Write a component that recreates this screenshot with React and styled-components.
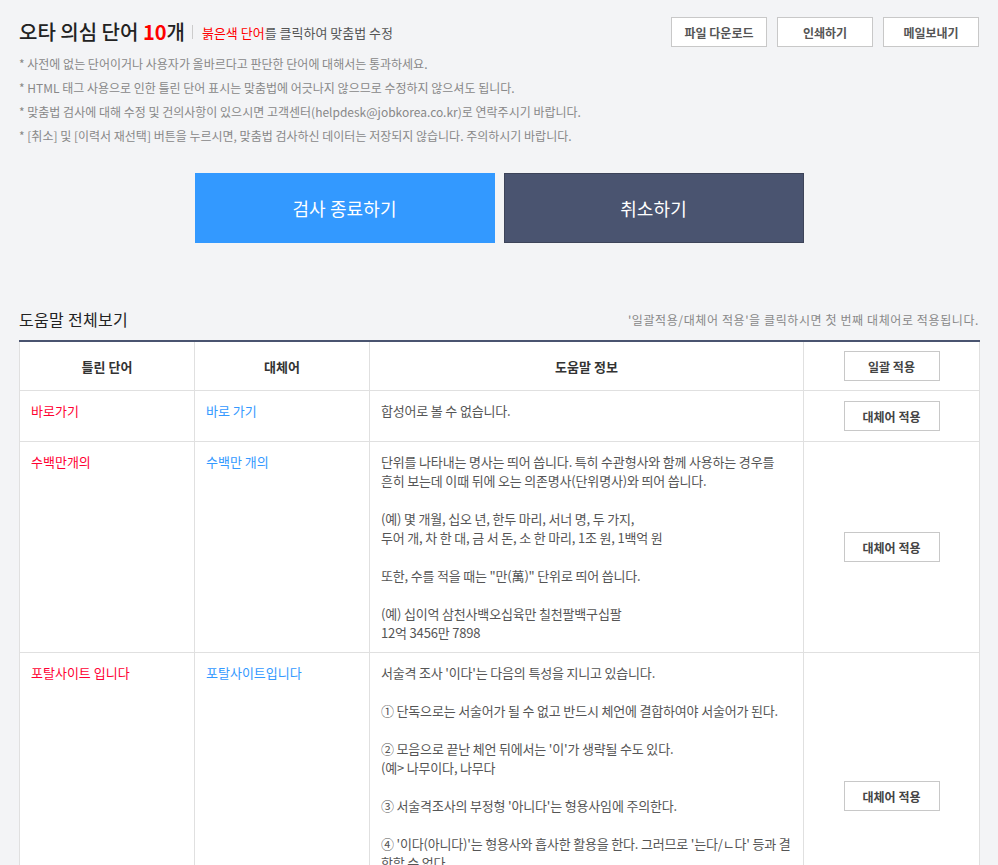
import React from "react";
import styled, { createGlobalStyle } from "styled-components";

const GlobalStyle = createGlobalStyle`
  body {
    margin: 0;
    background: #f3f4f6;
    font-family: "Noto Sans CJK KR", "Noto Sans", sans-serif;
    color: #555;
  }
`;

const notes = [
  "* 사전에 없는 단어이거나 사용자가 올바르다고 판단한 단어에 대해서는 통과하세요.",
  "* HTML 태그 사용으로 인한 틀린 단어 표시는 맞춤법에 어긋나지 않으므로 수정하지 않으셔도 됩니다.",
  "* 맞춤법 검사에 대해 수정 및 건의사항이 있으시면 고객센터(helpdesk@jobkorea.co.kr)로 연락주시기 바랍니다.",
  "* [취소] 및 [이력서 재선택] 버튼을 누르시면, 맞춤법 검사하신 데이터는 저장되지 않습니다. 주의하시기 바랍니다.",
];

const rows = [
  {
    wrong: "바로가기",
    right: "바로 가기",
    info: "합성어로 볼 수 없습니다.",
  },
  {
    wrong: "수백만개의",
    right: "수백만 개의",
    info:
      "단위를 나타내는 명사는 띄어 씁니다. 특히 수관형사와 함께 사용하는 경우를\n흔히 보는데 이때 뒤에 오는 의존명사(단위명사)와 띄어 씁니다.\n\n(예) 몇 개월, 십오 년, 한두 마리, 서너 명, 두 가지,\n두어 개, 차 한 대, 금 서 돈, 소 한 마리, 1조 원, 1백억 원\n\n또한, 수를 적을 때는 \"만(萬)\" 단위로 띄어 씁니다.\n\n(예) 십이억 삼천사백오십육만 칠천팔백구십팔\n12억 3456만 7898",
  },
  {
    wrong: "포탈사이트 입니다",
    right: "포탈사이트입니다",
    info:
      "서술격 조사 '이다'는 다음의 특성을 지니고 있습니다.\n\n① 단독으로는 서술어가 될 수 없고 반드시 체언에 결합하여야 서술어가 된다.\n\n② 모음으로 끝난 체언 뒤에서는 '이'가 생략될 수도 있다.\n(예> 나무이다, 나무다\n\n③ 서술격조사의 부정형 '아니다'는 형용사임에 주의한다.\n\n④ '이다(아니다)'는 형용사와 흡사한 활용을 한다. 그러므로 '는다/ㄴ다' 등과 결\n합할 수 없다.\n\n⑤ '이다'는 체언 뒤에 붙여 쓰는 조사이므로 앞말과 띄어 쓰지 않는다.\n(예> 학생이다, 포탈사이트입니다",
  },
];

export default function App() {
  return (
    <Page>
      <GlobalStyle />
      <TopBar>
        <TitleWrap>
          <Title>
            오타 의심 단어 <Count>10</Count>개
          </Title>
          <Divider />
          <Guide>
            <Red>붉은색 단어</Red>를 클릭하여 맞춤법 수정
          </Guide>
        </TitleWrap>
        <ToolButtons>
          <ToolButton>파일 다운로드</ToolButton>
          <ToolButton>인쇄하기</ToolButton>
          <ToolButton>메일보내기</ToolButton>
        </ToolButtons>
      </TopBar>

      <Notes>
        {notes.map((n) => (
          <li key={n}>{n}</li>
        ))}
      </Notes>

      <ActionRow>
        <BigButton $primary>검사 종료하기</BigButton>
        <BigButton>취소하기</BigButton>
      </ActionRow>

      <HelpHead>
        <HelpTitle>도움말 전체보기</HelpTitle>
        <HelpNote>'일괄적용/대체어 적용'을 클릭하시면 첫 번째 대체어로 적용됩니다.</HelpNote>
      </HelpHead>

      <Table>
        <colgroup>
          <col style={{ width: 175 }} />
          <col style={{ width: 175 }} />
          <col style={{ width: 434 }} />
          <col style={{ width: 176 }} />
        </colgroup>
        <thead>
          <tr>
            <Th>틀린 단어</Th>
            <Th>대체어</Th>
            <Th>도움말 정보</Th>
            <Th>
              <ApplyButton>일괄 적용</ApplyButton>
            </Th>
          </tr>
        </thead>
        <tbody>
          {rows.map((r) => (
            <tr key={r.wrong}>
              <Td>
                <Word $wrong>{r.wrong}</Word>
              </Td>
              <Td>
                <Word>{r.right}</Word>
              </Td>
              <Td>
                <Info>{r.info}</Info>
              </Td>
              <ButtonCell>
                <ApplyButton>대체어 적용</ApplyButton>
              </ButtonCell>
            </tr>
          ))}
        </tbody>
      </Table>
    </Page>
  );
}

const Page = styled.div`
  width: 960px;
  padding: 17px 19px 40px;
`;

const TopBar = styled.div`
  display: flex;
  justify-content: space-between;
  align-items: center;
  height: 30px;
`;

const TitleWrap = styled.div`
  display: flex;
  align-items: center;
`;

const Title = styled.h1`
  margin: 0;
  font-size: 20px;
  font-weight: 500;
  color: #222;
  line-height: 30px;
`;

const Count = styled.span`
  color: #ff0000;
  font-weight: 700;
`;

const Divider = styled.span`
  width: 1px;
  height: 14px;
  background: #ccc;
  margin: 0 9px 0 7px;
`;

const Guide = styled.span`
  font-size: 13px;
  color: #555;
`;

const Red = styled.span`
  color: #ff0000;
`;

const ToolButtons = styled.div`
  display: flex;
  gap: 10px;
`;

const ToolButton = styled.button`
  width: 96px;
  height: 30px;
  padding: 0;
  background: #fff;
  border: 1px solid #c8c8c8;
  font-family: inherit;
  font-size: 12px;
  font-weight: 700;
  color: #555;
  cursor: pointer;
`;

const Notes = styled.ul`
  list-style: none;
  margin: 5px 0 0;
  padding: 0;
  font-size: 12px;
  line-height: 24px;
  color: #888;
`;

const ActionRow = styled.div`
  display: flex;
  justify-content: center;
  gap: 9px;
  margin-top: 25px;
`;

const BigButton = styled.button`
  width: 300px;
  height: 70px;
  padding: 0;
  border: 1px solid ${(p) => (p.$primary ? "#3399ff" : "#3d4459")};
  background: ${(p) => (p.$primary ? "#3399ff" : "#4a5470")};
  color: #fff;
  font-family: inherit;
  font-size: 18px;
  letter-spacing: 0.1px;
  cursor: pointer;
`;

const HelpHead = styled.div`
  display: flex;
  justify-content: space-between;
  align-items: flex-end;
  margin-top: 64px;
  padding-bottom: 9px;
`;

const HelpTitle = styled.h2`
  margin: 0;
  font-size: 16px;
  font-weight: 400;
  color: #222;
  line-height: 24px;
  letter-spacing: 0.3px;
`;

const HelpNote = styled.span`
  font-size: 12px;
  color: #888;
  line-height: 22px;
  letter-spacing: 0.6px;
`;

const Table = styled.table`
  width: 960px;
  table-layout: fixed;
  border-collapse: collapse;
  background: #fff;
  border-top: 2px solid #4a5470;
  font-size: 13px;
`;

const Th = styled.th`
  height: 48px;
  padding: 0 11px;
  border: 1px solid #e0e0e0;
  border-top: none;
  font-weight: 700;
  color: #333;
  text-align: center;
  vertical-align: middle;
`;

const Td = styled.td`
  padding: 10px 11px;
  border: 1px solid #e0e0e0;
  vertical-align: top;
  line-height: 19px;
`;

const ButtonCell = styled(Td)`
  text-align: center;
  vertical-align: middle;
`;

const Word = styled.span`
  color: ${(p) => (p.$wrong ? "#ff0033" : "#3399ff")};
  cursor: pointer;
`;

const Info = styled.div`
  white-space: pre-line;
  color: #555;
  letter-spacing: -0.18px;
`;

const ApplyButton = styled.button`
  width: 96px;
  height: 30px;
  padding: 0;
  background: #fff;
  border: 1px solid #c8c8c8;
  font-family: inherit;
  font-size: 12px;
  font-weight: 700;
  color: #444;
  cursor: pointer;
  vertical-align: middle;
`;
